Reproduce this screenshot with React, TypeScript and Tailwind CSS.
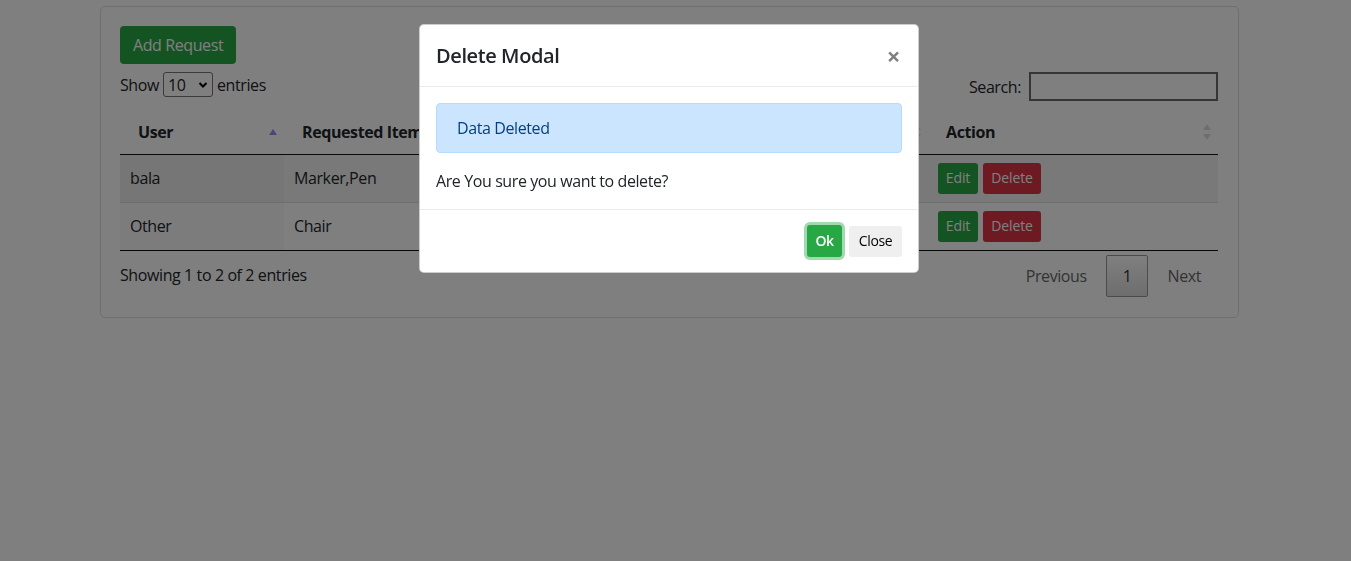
import React from "react"

const rows = [
  { user: "bala", item: "Marker,Pen" },
  { user: "Other", item: "Chair" },
]

function SortAsc() {
  return (
    <svg width="8" height="6" viewBox="0 0 8 6" className="shrink-0">
      <path d="M4 0 L8 6 L0 6 Z" fill="#8e8ef5" />
    </svg>
  )
}

function SortBoth() {
  return (
    <svg width="8" height="16" viewBox="0 0 8 16" className="shrink-0">
      <path d="M4 0 L8 6 L0 6 Z" fill="#dcdcdc" />
      <path d="M4 16 L8 10 L0 10 Z" fill="#dcdcdc" />
    </svg>
  )
}

function Th({ label, width, sort }: { label: string; width: string; sort: "asc" | "both" }) {
  return (
    <th className={`${width} h-[44px] border-b border-[#111] p-0 text-left font-bold`}>
      <div className="flex items-center justify-between pl-[18px] pr-[7px]">
        <span className="whitespace-nowrap">{label}</span>
        {sort === "asc" ? <SortAsc /> : <SortBoth />}
      </div>
    </th>
  )
}

export default function App() {
  return (
    <div className="relative min-h-[561px] bg-white font-['Open_Sans',sans-serif] text-base leading-6 tracking-[-0.4px] text-[#212529]">
      {/* page */}
      <div className="ml-[100px] w-[1139px] pt-[6px]">
        <div className="rounded-[5px] border border-black/[0.13] pb-[20px] pl-[19px] pr-[20px] pt-[19px]">
          <button className="h-[38px] rounded-[4px] bg-[#28a745] px-[13px] text-white">Add Request</button>

          <div className="mt-[8px] flex h-[29px] items-start justify-between">
            <div className="flex items-center gap-[4px]">
              <span>Show</span>
              <div className="flex h-[25px] w-[50px] items-center justify-between rounded-[3px] border border-[#767676] pl-[4px] pr-[4px]">
                <span>10</span>
                <svg width="10" height="8" viewBox="0 0 10 8">
                  <path d="M1.5 2 L5 5.5 L8.5 2" fill="none" stroke="#000" strokeWidth="2" />
                </svg>
              </div>
              <span>entries</span>
            </div>
            <div className="flex items-center gap-[8px]">
              <span>Search:</span>
              <div className="h-[29px] w-[189px] border-2 border-[#6b6b6b]" />
            </div>
          </div>

          <table className="mt-[9px] w-full border-collapse">
            <thead>
              <tr>
                <Th label="User" width="w-[164px]" sort="asc" />
                <Th label="Requested Item" width="w-[220px]" sort="both" />
                <th className="w-[210px] border-b border-[#111] p-0" />
                <th className="w-[214px] border-b border-[#111] p-0">
                  <div className="flex justify-end pr-[7px]">
                    <SortBoth />
                  </div>
                </th>
                <Th label="Action" width="" sort="both" />
              </tr>
            </thead>
            <tbody>
              {rows.map((r, i) => {
                const last = i === rows.length - 1 ? "border-b border-[#111]" : ""
                return (
                  <tr key={r.user} className={i === 0 ? "bg-[#f3f3f3]" : "border-t border-[#dcdcdc] bg-white"}>
                    <td className={`h-[48px] px-[10px] py-0 ${i === 0 ? "bg-[#ececec]" : "bg-[#f8f8f8]"} ${last}`}>
                      {r.user}
                    </td>
                    <td className={`px-[10px] py-0 ${last}`}>{r.item}</td>
                    <td className={`px-[10px] py-0 ${last}`} />
                    <td className={`px-[10px] py-0 ${last}`} />
                    <td className={`px-[10px] py-0 ${last}`}>
                      <div className="flex gap-[5px] tracking-[-0.1px]">
                        <button className="h-[31px] w-[40px] rounded-[3px] bg-[#28a745] text-sm text-white">Edit</button>
                        <button className="h-[31px] w-[58px] rounded-[3px] bg-[#dc3545] text-sm text-white">Delete</button>
                      </div>
                    </td>
                  </tr>
                )
              })}
            </tbody>
          </table>

          <div className="flex items-start justify-between">
            <div className="pt-[12px]">Showing 1 to 2 of 2 entries</div>
            <div className="flex gap-[2px] pt-[4px] text-[#333]">
              <span className="flex h-[42px] items-center border border-transparent px-[16px] text-[#666]">Previous</span>
              <span className="flex h-[42px] items-center rounded-[2px] border border-[#979797] bg-gradient-to-b from-white to-[#dcdcdc] px-[16px]">1</span>
              <span className="flex h-[42px] items-center border border-transparent px-[16px] text-[#666]">Next</span>
            </div>
          </div>
        </div>
      </div>

      {/* modal */}
      <div className="fixed inset-0 bg-black/50">
        <div className="ml-[419px] mt-[24px] w-[500px] rounded-[5px] border border-black/20 bg-white">
          <div className="flex items-center justify-between border-b border-[#e9ecef] px-[16px] pb-[15px] pt-[16px]">
            <h5 className="text-xl font-semibold leading-[30px]">Delete Modal</h5>
            <span className="mr-[2px] text-2xl font-bold leading-none text-black/50">×</span>
          </div>
          <div className="p-[16px]">
            <div className="rounded-[4px] border border-[#b8daff] bg-[#cce5ff] px-[20px] py-[12px] text-[#004085]">
              Data Deleted
            </div>
            <p className="mt-[16px]">Are You sure you want to delete?</p>
          </div>
          <div className="flex items-center justify-end gap-[7px] border-t border-[#e9ecef] px-[16px] pb-[15px] pt-[15px]">
            <button className="h-[32px] w-[35px] rounded-[3px] bg-[#28a745] text-sm font-semibold text-white shadow-[0_0_0_3px_rgba(72,180,97,0.5)]">
              Ok
            </button>
            <button className="h-[31px] w-[53px] rounded-[3px] bg-[#efefef] text-sm text-black">Close</button>
          </div>
        </div>
      </div>
    </div>
  )
}
